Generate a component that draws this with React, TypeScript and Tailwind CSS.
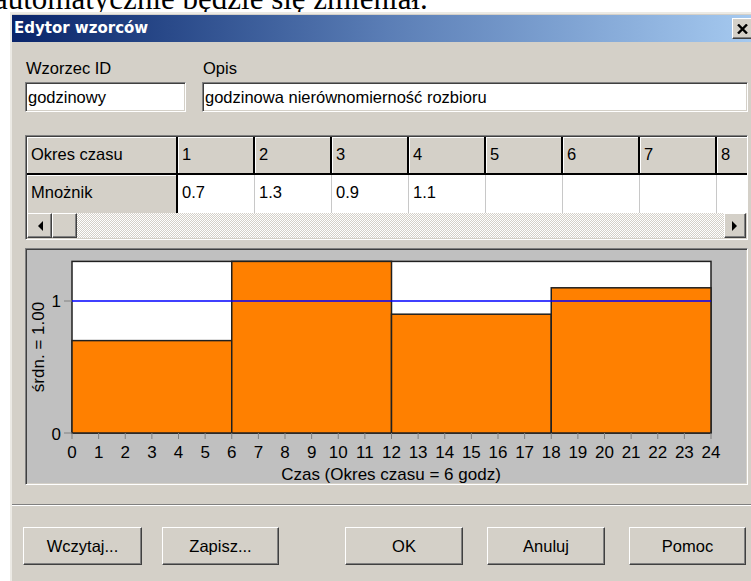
import React from "react";

const sunken =
  "border border-t-[#808080] border-l-[#808080] border-b-white border-r-white shadow-[inset_1px_1px_0_#404040,inset_-1px_-1px_0_#d4d0c8]";
const raised =
  "border border-t-white border-l-white border-b-[#404040] border-r-[#404040] shadow-[inset_-1px_-1px_0_#808080,inset_1px_1px_0_#d4d0c8]";

const periods = ["1", "2", "3", "4", "5", "6", "7", "8"];
const factors = ["0.7", "1.3", "0.9", "1.1", "", "", "", ""];
const values = [0.7, 1.3, 0.9, 1.1];

// plot geometry inside the chart svg
const X0 = 45;
const HOUR = 639 / 24;
const Y0 = 183;
const UNIT = 132;
const YMAX = 1.3;

function Chart() {
  const top = Y0 - YMAX * UNIT;
  return (
    <svg width={719} height={233} className="block font-['Liberation_Sans',Arial,sans-serif]">
      <rect x={X0} y={top} width={24 * HOUR} height={YMAX * UNIT} fill="#ffffff" stroke="#202020" strokeWidth={1.5} />
      {values.map((v, i) => (
        <rect
          key={i}
          x={X0 + i * 6 * HOUR}
          y={Y0 - v * UNIT}
          width={6 * HOUR}
          height={v * UNIT}
          fill="#ff8000"
          stroke="#202020"
          strokeWidth={1.5}
        />
      ))}
      <line x1={X0} x2={X0 + 24 * HOUR} y1={Y0 - UNIT} y2={Y0 - UNIT} stroke="#0000ff" strokeWidth={1.5} />

      {/* y axis ticks */}
      <line x1={37} x2={X0} y1={Y0 - UNIT} y2={Y0 - UNIT} stroke="#808080" />
      <line x1={37} x2={X0} y1={Y0} y2={Y0} stroke="#808080" />
      <text x={34} y={57} fontSize={17} textAnchor="end" fill="#000">1</text>
      <text x={34} y={190} fontSize={17} textAnchor="end" fill="#000">0</text>
      <text
        x={0}
        y={0}
        fontSize={17}
        textAnchor="middle"
        fill="#000"
        transform="translate(17 97) rotate(-90)"
      >
        śrdn. = 1.00
      </text>

      {/* x axis ticks */}
      {Array.from({ length: 25 }, (_, h) => (
        <g key={h}>
          <line x1={X0 + h * HOUR} x2={X0 + h * HOUR} y1={Y0} y2={Y0 + 6} stroke="#808080" />
          <text x={X0 + h * HOUR} y={208} fontSize={17} textAnchor="middle" fill="#000">
            {h}
          </text>
        </g>
      ))}
      <text x={364} y={230} fontSize={17} textAnchor="middle" fill="#000">
        Czas (Okres czasu = 6 godz)
      </text>
    </svg>
  );
}

function Arrow({ dir }: { dir: "left" | "right" }) {
  return (
    <svg width="6" height="10" viewBox="0 0 6 10">
      {dir === "left" ? <path d="M6 0 L1 5 L6 10 Z" fill="#000" /> : <path d="M0 0 L5 5 L0 10 Z" fill="#000" />}
    </svg>
  );
}

function Button({ label, className }: { label: string; className?: string }) {
  return (
    <div className={`${raised} h-[38px] flex items-center justify-center text-black ${className ?? ""}`}>
      {label}
    </div>
  );
}

export default function App() {
  return (
    <div className="w-[751px] h-[581px] overflow-hidden bg-white font-['Liberation_Sans',Arial,sans-serif] text-[16.5px] leading-[19px]">
      <div className="h-[12px] overflow-hidden">
        <div className="-mt-[17px] -ml-[6px] whitespace-nowrap font-['Liberation_Serif','Times_New_Roman',serif] text-[31px] leading-[31px] text-black">
          automatycznie będzie się zmieniał.
        </div>
      </div>

      <div className="ml-[10px] w-[745px] border-l-2 border-t-2 border-[#eceae5] bg-[#d4d0c8] pb-[40px]">
        {/* title bar */}
        <div className="mt-px h-[27px] flex items-center bg-linear-to-r from-[#0a246a] via-[#5a7db5] to-[#a6caf0]">
          <span className="pl-[2px] font-['DejaVu_Sans',Verdana,sans-serif] font-bold text-[15px] text-white">
            Edytor wzorców
          </span>
          <div className={`${raised} ml-auto mr-[2px] w-[21px] h-[21px] flex items-center justify-center bg-[#d4d0c8]`}>
            <svg width="11" height="10" viewBox="0 0 11 10">
              <path d="M1 0.5 L10 9.5 M10 0.5 L1 9.5" stroke="#000" strokeWidth="2.4" />
            </svg>
          </div>
        </div>

        <div className="pl-[13px] w-[736px]">
          {/* id / description */}
          <div className="mt-[17px] flex gap-[16px]">
            <div className="w-[161px] flex flex-col">
              <span className="pl-px">Wzorzec ID</span>
              <div className={`${sunken} mt-[4px] h-[30px] bg-white flex items-center pl-[2px]`}>godzinowy</div>
            </div>
            <div className="w-[546px] flex flex-col">
              <span className="pl-px">Opis</span>
              <div className={`${sunken} mt-[4px] h-[30px] bg-white flex items-center pl-[2px]`}>
                godzinowa nierównomierność rozbioru
              </div>
            </div>
          </div>

          {/* periods grid */}
          <div className={`${sunken} mt-[23px] w-[723px] h-[105px] p-px bg-white flex flex-col overflow-hidden`}>
            <div className="h-[38px] flex shrink-0">
              <div className="w-[151px] shrink-0 bg-[#d4d0c8] border-r-2 border-b-2 border-black shadow-[inset_1px_1px_0_#fff] pl-[4px] pt-[8px]">
                Okres czasu
              </div>
              {periods.map((p) => (
                <div
                  key={p}
                  className="w-[77px] shrink-0 bg-[#d4d0c8] border-r-2 border-b-2 border-black shadow-[inset_1px_1px_0_#fff] pl-[4px] pt-[8px]"
                >
                  {p}
                </div>
              ))}
            </div>
            <div className="h-[38px] flex shrink-0">
              <div className="w-[151px] shrink-0 bg-[#d4d0c8] border-r-2 border-black shadow-[inset_1px_1px_0_#fff] pl-[4px] pt-[8px]">
                Mnożnik
              </div>
              {factors.map((f, i) => (
                <div key={i} className="w-[77px] shrink-0 bg-white border-r border-[#c8c8c8] pl-[4px] pt-[8px]">
                  {f}
                </div>
              ))}
            </div>
            <div className="h-[25px] flex shrink-0 bg-[#eae8e4] bg-[repeating-conic-gradient(#d4d0c8_0%_25%,#ffffff_0%_50%)] bg-[length:2px_2px]">
              <div className={`${raised} w-[25px] h-full bg-[#d4d0c8] flex items-center justify-center`}>
                <Arrow dir="left" />
              </div>
              <div className={`${raised} w-[25px] h-full bg-[#d4d0c8]`} />
              <div className={`${raised} ml-auto w-[22px] h-full bg-[#d4d0c8] flex items-center justify-center`}>
                <Arrow dir="right" />
              </div>
            </div>
          </div>

          {/* chart */}
          <div className={`${sunken} mt-[8px] w-[723px] h-[237px] p-px bg-[#c0c0c0]`}>
            <Chart />
          </div>
        </div>

        {/* separator */}
        <div className="mt-[19px] border-t border-b border-t-[#808080] border-b-white" />

        {/* buttons */}
        <div className="mt-[21px] flex pl-[11px]">
          <Button label="Wczytaj..." className="w-[119px]" />
          <Button label="Zapisz..." className="w-[117px] ml-[20px]" />
          <Button label="OK" className="w-[118px] ml-[66px]" />
          <Button label="Anuluj" className="w-[118px] ml-[24px]" />
          <Button label="Pomoc" className="w-[117px] ml-[24px]" />
        </div>
      </div>
    </div>
  );
}
